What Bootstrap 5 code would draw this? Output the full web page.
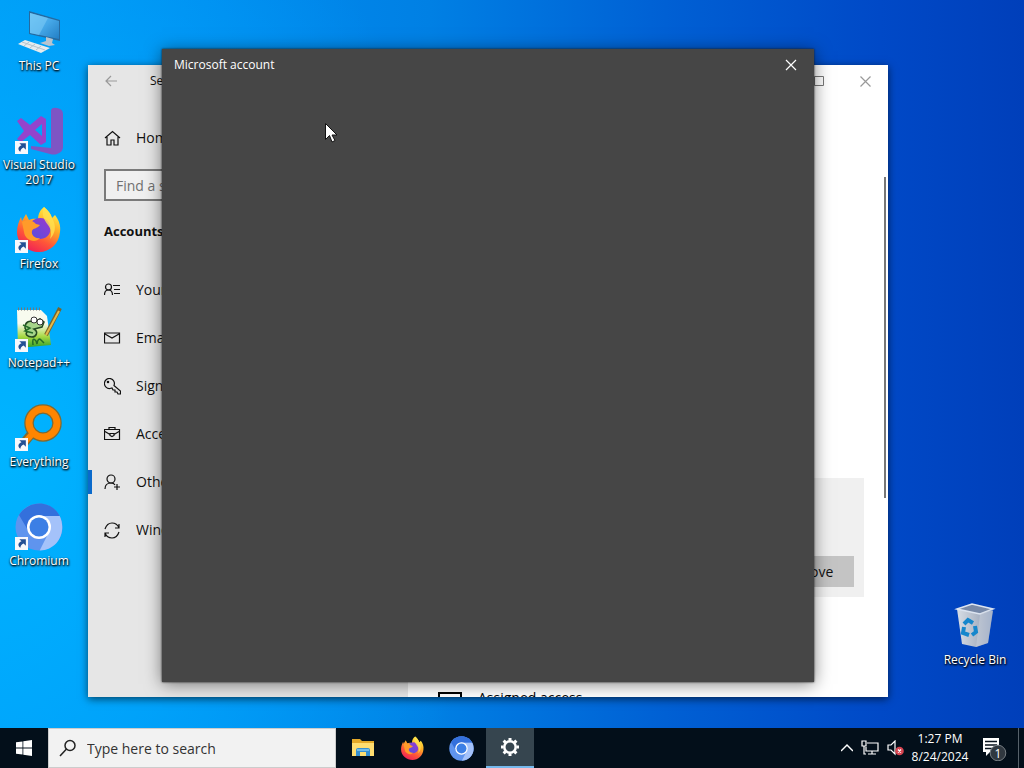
<!DOCTYPE html>
<html lang="en">
<head>
<meta charset="utf-8">
<meta name="viewport" content="width=device-width, initial-scale=1">
<title>Desktop</title>
<link href="https://cdn.jsdelivr.net/npm/bootstrap@5.3.0/dist/css/bootstrap.min.css" rel="stylesheet">
<style>
body{font-family:"Open Sans","Noto Sans",sans-serif;font-size:14px;line-height:20px;color:#111;background:#0046c0}
button{color:inherit}
svg{display:block;flex:none}
.line-art{fill:none;stroke:currentColor;stroke-width:1.2}
.desktop{background:radial-gradient(ellipse 48% 90% at 0 62%,#00b4ff 0,rgba(0,172,255,.75) 40%,rgba(0,160,250,0) 100%),linear-gradient(90deg,#009af4 0,#008df0 18%,#0080e4 42%,#0060d4 65%,#0049c7 86%,#003fba 100%)}
.shortcuts{width:78px}
.shortcut{height:99px;padding-top:8px;color:#fff;font-size:12px;line-height:15px;text-align:center;text-decoration:none;text-shadow:1px 1px 2px #000,0 1px 2px #000}
.shortcut:hover{color:#fff}
.shortcut svg{margin-bottom:2px}
.recycle{right:10px;bottom:35px;width:78px}
.settings-win{inset:65px 136px 31px 88px;background:#fff;box-shadow:0 2px 8px rgba(0,0,0,.6)}
.account-win{inset:49px 210px 46px 162px;background:#464646;color:#fff;box-shadow:0 2px 16px rgba(0,0,0,.5),0 0 2px #222}
.win-head{height:32px;font-size:12px;flex:none}
.side{width:320px;background:#e6e6e6}
.back{color:#999}
.side-row{height:48px;padding-left:16px;color:#111;text-decoration:none;gap:15px}
.side-home{margin-top:17px}
.side-row.current{background:linear-gradient(#0a6acb,#0a6acb) 0 50%/4px 24px no-repeat}
.find{height:32px;margin:7px 16px 0;border:2px solid #7a7a7a;border-radius:0;background:#f0f0f0;padding:0 10px;font-size:14px;width:288px}
.find::placeholder{color:#707070;opacity:1}
.side-title{font-size:13px;line-height:30px;margin:15px 16px 20px}
.main-pane{padding:0 24px 0 30px}
.user-card{background:#f0f0f0;height:119px;margin-top:381px;padding:10px}
.remove{background:#c4c4c4;border:0;height:31px;width:94px}
.assigned{margin-top:91px;gap:16px;color:#000}
.scroll-thumb{right:2px;top:112px;width:2px;height:321px;background:#777}
.cap-btn{width:46px;height:32px}
.pointer-arrow{left:325px;top:123px}
.taskbar{height:40px;background:#030f1a;color:#fff}
.task-btn{width:48px;height:40px}
.task-apps{margin-left:3px;gap:1px}
.task-btn.active-app{background:#36454f;border-bottom:2px solid #76b9ed!important}
.search-box{width:288px;background:#f2f2f2;border:1px solid #ccc;color:#222;padding-left:10px;gap:10px}
.task-search{font-size:14px;color:#333;background:none;border:0;width:230px;padding:2px 0 0}
.task-search::placeholder{color:#333;opacity:1}
.clock{font-size:12px;line-height:18px;width:60px;margin-left:6px}
.peek{width:6px;border-left:1px solid #56616a}
</style>
</head>
<body class="vh-100 d-flex flex-column overflow-hidden">
<svg width="0" height="0" class="position-absolute" aria-hidden="true">
<defs>
<linearGradient id="ffBody" x1=".7" y1="0" x2=".2" y2="1"><stop offset="0" stop-color="#fff048"/><stop offset=".35" stop-color="#ffac25"/><stop offset=".65" stop-color="#ff5738"/><stop offset="1" stop-color="#ed175b"/></linearGradient>
<linearGradient id="ffCore" x1="0" y1="1" x2="1" y2="0"><stop offset="0" stop-color="#5550df"/><stop offset="1" stop-color="#9b37cd"/></linearGradient>
<linearGradient id="screen" x2="1" y2="1"><stop stop-color="#65c2f5"/><stop offset=".5" stop-color="#46a8e8"/><stop offset="1" stop-color="#237fc5"/></linearGradient>
<linearGradient id="pad" y2="1" x2="0"><stop offset=".35" stop-color="#f8fbef"/><stop offset=".7" stop-color="#a7d944"/><stop offset="1" stop-color="#2e9e26"/></linearGradient>
<linearGradient id="bin" x2="1"><stop stop-color="#d7dde5"/><stop offset=".55" stop-color="#afb8c7"/><stop offset="1" stop-color="#8094b8"/></linearGradient>
<symbol id="link-arrow" viewBox="0 0 12 12"><path fill="#f8f8fc" d="M0 0h12v12H0z"/><path fill="#244f94" d="M4 2h6v6L8 6C6 7 5 8 5 10 2 8 3 5 6 4z"/></symbol>
<symbol id="firefox" viewBox="0 0 48 48"><path fill="url(#ffBody)" d="M29 1c4 3 7 7 8 11l3-3c4 5 6 11 5 17-1 12-10 20-21 20S2 38 2 26c0-6 2-11 4-15l1 4 4-7 3 6c3-1 7-2 9 0 0-6 2-10 6-13z"/><path fill="url(#ffCore)" d="M16 16c6-6 15-5 18 1 4 7 0 16-9 16-7 0-11-6-9-11z"/><path fill="#ff9b2a" d="M7 16c5-3 11-2 14 2l4 1c-3 4-7 3-8 6-1 4 3 8 8 7-5 6-15 2-16-6z"/><path fill="#ffe150" d="M29 1c4 3 7 7 8 11 5 8 3 16-2 21 2-6 1-10-2-14-4-5-7-11-4-18z" opacity=".8"/></symbol>
<symbol id="chromium" viewBox="0 0 48 48"><circle cx="24" cy="24" r="23.500" fill="#5f94ee"/><path fill="#3470dc" d="M4 12C14-4 37-3 44.700 13H24c-7 0-11 5-11 11 0 2 0 4 1 5z"/><path fill="#a4c2fa" d="M24 13h20.700c7 15-1 34-20 34.500L34 29c3-6 0-13-10-16z"/><circle cx="24" cy="24" r="12" fill="#fff"/><circle cx="24" cy="24" r="9.500" fill="#3c7fe5"/></symbol>
</defs></svg>

<main class="desktop position-relative flex-grow-1 overflow-hidden">
<nav class="shortcuts d-flex flex-column" aria-label="Desktop">
<a href="#" class="shortcut d-flex flex-column align-items-center"><svg width="48" height="48" viewBox="0 0 48 48"><path fill="#256aa0" d="M14 3l31 9v21l-31-7z"/><path fill="url(#screen)" d="M15 5l29 8v18l-29-6z"/><path fill="#7cc9f5" d="M15 5l18 5-9 17-9-2z" opacity=".6"/><path fill="#b7c4cf" d="M31 29l7 2-1 4 3 2-6 1-9-3 6-2z"/><path fill="#e6ebee" d="M10 32l25 8-9 5-23-9z"/><path stroke="#b4c3cd" fill="none" d="M7 34l23 8M14 34l-5 4m11-2l-5 4m11-2l-5 4"/></svg>This PC</a>
<a href="#" class="shortcut d-flex flex-column align-items-center"><svg width="48" height="48" viewBox="0 0 48 48"><path fill="#7e55c4" d="M36 3q1-3 6-2 6 1 6 6v33q0 5-6 7-3 1-7 0l-19-5v-3l20 2z"/><path fill="#9444cc" fill-rule="evenodd" d="M2 14l4-3 9 7 11-9 5 3v23l-5 3-11-10-9 7-4-3 7-8zm18 9l7 6V17z"/><use href="#link-arrow" x="0" y="34" width="13" height="13"/></svg>Visual Studio<br>2017</a>
<a href="#" class="shortcut d-flex flex-column align-items-center"><svg width="48" height="48" viewBox="0 0 48 48"><use href="#firefox" width="48" height="48"/><use href="#link-arrow" x="0" y="34" width="13" height="13"/></svg>Firefox</a>
<a href="#" class="shortcut d-flex flex-column align-items-center"><svg width="48" height="48" viewBox="0 0 48 48"><path fill="url(#pad)" d="M2 5h24l6 6 4 29-33 3z"/><path stroke="#777" stroke-width="3" stroke-dasharray="1 2" d="M3 4h23"/><path fill="#a6d58a" stroke="#244a22" stroke-width="1.500" d="M10 23c0-6 4-8 9-6l6-3 4 3-2 5-8 2c5 3 2 8-2 8-5 0-7-3-5-5z"/><g fill="#fff" stroke="#333"><circle cx="19" cy="15" r="3"/><circle cx="25" cy="17" r="3"/></g><path d="M8 20l7 3-5 3 8 2M18 40q-1-9 3-4l1 3q1-7 4-4l3 3" fill="none" stroke="#236c27" stroke-width="1.500"/><path stroke="#79632a" stroke-width="4" d="M31 30L45 3"/><path stroke="#e4ba49" stroke-width="2" d="M31 30L44 6"/><use href="#link-arrow" x="0" y="34" width="13" height="13"/></svg>Notepad++</a>
<a href="#" class="shortcut d-flex flex-column align-items-center"><svg width="48" height="48" viewBox="0 0 48 48"><path stroke="#7d6a35" stroke-width="9" d="M18 28L8 40"/><circle cx="28" cy="19" r="14" fill="none" stroke="#7d6a35" stroke-width="9.500"/><path stroke="#ff8500" stroke-width="6" d="M19 28L9 39"/><circle cx="28" cy="19" r="14" fill="none" stroke="#ff8500" stroke-width="7"/><use href="#link-arrow" x="0" y="34" width="13" height="13"/></svg>Everything</a>
<a href="#" class="shortcut d-flex flex-column align-items-center"><svg width="48" height="48" viewBox="0 0 48 48"><use href="#chromium" width="48" height="48"/><use href="#link-arrow" x="0" y="34" width="13" height="13"/></svg>Chromium</a>
</nav>
<a href="#" class="shortcut recycle position-absolute d-flex flex-column align-items-center"><svg width="48" height="48" viewBox="0 0 48 48"><path fill="url(#bin)" d="M6 7l36 2-5 32-12 4-14-3z"/><path fill="#7889a7" stroke="#dce4f0" stroke-width="1.500" d="M6 7l15-5 21 5-13 5z"/><path fill="#cbd1dc" opacity=".5" d="M29 12l13-5-5 34-12 4z"/><g fill="none" stroke="#1687cc" stroke-width="4"><path d="M13 22l4-4 5 3M24 24l1 6-4 3M18 33l-6-2 1-6"/></g></svg>Recycle Bin</a>

<section class="settings-win position-absolute d-flex overflow-hidden" aria-label="Settings">
<div class="side flex-shrink-0 d-flex flex-column">
<div class="win-head d-flex align-items-center"><button class="btn p-0 border-0 back d-flex justify-content-center cap-btn align-items-center rounded-0" aria-label="Back"><svg class="line-art" width="12" height="12" viewBox="0 0 12 12"><path d="M12 6H1m5-5L1 6l5 5"/></svg></button><span class="ms-3">Settings</span></div>
<a href="#" class="side-row side-home d-flex align-items-center"><svg class="line-art" width="17" height="17" viewBox="0 0 17 17"><path d="M1 8l7.500-6.500L16 8M3 7v8h4v-5h3v5h4V7"/></svg>Home</a>
<input class="find" type="search" placeholder="Find a setting" aria-label="Find a setting">
<h2 class="side-title fw-bold">Accounts</h2>
<nav>
<a href="#" class="side-row d-flex align-items-center"><svg class="line-art" width="17" height="17" viewBox="0 0 17 17"><circle cx="4.500" cy="5" r="3"/><path d="M.5 13q0-5 4-5t4 5M9 3.500h7M10 7.500h6M10 11.500h6"/></svg>Your info</a>
<a href="#" class="side-row d-flex align-items-center"><svg class="line-art" width="17" height="17" viewBox="0 0 17 17"><path d="M.5 3h15v10H.5zM1 4l7 4 7-4"/></svg>Email &amp; accounts</a>
<a href="#" class="side-row d-flex align-items-center"><svg class="line-art" width="17" height="17" viewBox="0 0 17 17"><path d="M10 7.500A5 5 0 1 0 6 10.500l2-.5 1 2h2v2h2l1 2h2.500v-3z"/><circle cx="4" cy="4" r=".7"/></svg>Sign-in options</a>
<a href="#" class="side-row d-flex align-items-center"><svg class="line-art" width="17" height="17" viewBox="0 0 17 17"><path d="M.5 3.500h15v10H.5zM5 3.500v-2h6v2M1 5.500l5 3m4 0l5-3M6 7.500h4v2l-2 1-2-1z"/></svg>Access work or school</a>
<a href="#" class="side-row current d-flex align-items-center" aria-current="page"><svg class="line-art" width="17" height="17" viewBox="0 0 17 17"><circle cx="7" cy="5" r="4"/><path d="M1 15q0-6 6-6 3 0 4 2M13 10v6M10 13h6"/></svg>Other users</a>
<a href="#" class="side-row d-flex align-items-center"><svg class="line-art" width="17" height="17" viewBox="0 0 17 17"><path d="M1 7Q3 1 8 1t7 5m0-4v4h-4M15 10q-2 6-7 6t-7-5m0 4v-4h4"/></svg>Windows backup</a>
</nav></div>
<div class="flex-grow-1 position-relative">
<div class="win-head d-flex justify-content-end"><button class="btn p-0 border-0 cap-btn d-flex align-items-center justify-content-center rounded-0" aria-label="Maximize"><svg class="line-art" width="10" height="10" viewBox="0 0 10 10"><path stroke="#777" stroke-width="1" d="M.5.5h9v9h-9z"/></svg></button><button class="btn p-0 border-0 cap-btn d-flex align-items-center justify-content-center rounded-0" aria-label="Close"><svg class="line-art" width="11" height="11" viewBox="0 0 11 11"><path stroke="#999" d="M.5.5l10 10m0-10l-10 10"/></svg></button></div>
<div class="main-pane"><div class="user-card d-flex justify-content-end align-items-end"><button class="remove">Remove</button></div>
<div class="assigned d-flex"><svg width="24" height="22" viewBox="0 0 24 22" class="mt-1"><path d="M1 1h22v14H1z" fill="none" stroke="#000" stroke-width="2"/></svg><span>Assigned access</span></div></div>
<div class="scroll-thumb position-absolute"></div>
</div></section>

<section class="account-win position-absolute" role="dialog" aria-label="Microsoft account">
<div class="win-head d-flex align-items-center justify-content-between"><span class="ps-2 ms-1">Microsoft account</span><button class="btn p-0 border-0 cap-btn d-flex align-items-center justify-content-center text-white rounded-0" aria-label="Close"><svg class="line-art" width="12" height="12" viewBox="0 0 12 12"><path d="M1 1l10 10m0-10L1 11"/></svg></button></div>
</section>
<svg class="pointer-arrow position-absolute" width="13" height="20" viewBox="0 0 13 20"><path fill="#fff" stroke="#111" d="M.5.5v16l4-4 2.500 6.500 3-1.500L7 12h5z"/></svg>
</main>

<footer class="taskbar d-flex flex-shrink-0">
<button class="btn p-0 border-0 task-btn d-flex align-items-center justify-content-center rounded-0" aria-label="Start"><svg width="16" height="16" viewBox="0 0 16 16"><path fill="#fff" d="M0 2.300l6.500-.9v6.200H0zM7.300 1.300L16 0v7.600H7.300zM0 8.400h6.500v6.200L0 13.700zM7.300 8.400H16V16l-8.700-1.300z"/></svg></button>
<label class="search-box d-flex align-items-center"><svg class="line-art" width="18" height="18" viewBox="0 0 18 18"><circle cx="11" cy="6.500" r="5" stroke-width="1.500"/><path stroke-width="1.500" d="M7.500 10L1 17"/></svg><input class="task-search" type="search" placeholder="Type here to search" aria-label="Type here to search"></label>
<div class="task-apps d-flex">
<button class="btn p-0 border-0 task-btn d-flex align-items-center justify-content-center rounded-0" aria-label="File Explorer"><svg width="22" height="20" viewBox="0 0 22 20"><path fill="#e4a929" d="M0 1h8l2 2h12v15H0z"/><path fill="#ffdd70" d="M0 5h22v13H0z"/><path fill="#368fd0" d="M4 18v-6q0-2 2-2h10q2 0 2 2v6h-4v-4H8v4z"/><path fill="#73bde9" d="M5 11h12v2H5z"/></svg></button>
<button class="btn p-0 border-0 task-btn d-flex align-items-center justify-content-center rounded-0" aria-label="Firefox"><svg width="25" height="25"><use href="#firefox" width="25" height="25"/></svg></button>
<button class="btn p-0 border-0 task-btn d-flex align-items-center justify-content-center rounded-0" aria-label="Chromium"><svg width="25" height="25"><use href="#chromium" width="25" height="25"/></svg></button>
<button class="btn p-0 border-0 task-btn active-app d-flex align-items-center justify-content-center rounded-0" aria-label="Settings"><svg width="20" height="20" viewBox="0 0 20 20"><g fill="none" stroke="#fff"><circle cx="10" cy="10" r="5.700" stroke-width="2.500"/><path stroke-width="3" d="M10 1v2.500M10 16.500V19M1 10h2.500M16.500 10H19M3.600 3.600l1.800 1.800M14.600 14.600l1.800 1.800M3.600 16.400l1.800-1.800M14.600 5.400l1.800-1.800"/></g></svg></button>
</div>
<div class="ms-auto d-flex align-items-center">
<svg class="line-art" width="12" height="12" viewBox="0 0 12 12"><path stroke-width="1.500" d="M0 9l6-6 6 6"/></svg>
<svg class="line-art ms-2 me-2" width="18" height="16" viewBox="0 0 18 16"><path d="M6 3h11v8H5V7M1 1h4v5H1zM3 6v8h2M11 11v3M7 14h8"/></svg>
<svg width="17" height="16" viewBox="0 0 17 16"><path fill="none" stroke="#fff" stroke-width="1.200" d="M1 5h3l4-4v13l-4-4H1z"/><circle cx="12.500" cy="11" r="4.300" fill="#d64450"/><path stroke="#fff" stroke-width="1.300" d="M11 9.500l3 3m0-3l-3 3"/></svg>
<time class="clock text-center">1:27 PM<br>8/24/2024</time>
<button class="btn p-0 border-0 task-btn d-flex align-items-center justify-content-center rounded-0" aria-label="1 notification"><svg width="26" height="26" viewBox="0 0 26 26"><path fill="#fff" d="M2 3h16v14H9l-4 4v-4H2z"/><path stroke="#07121d" stroke-width="1.300" d="M4 6.500h12M4 10h12M4 13.500h7"/><circle cx="17" cy="18" r="7.800" fill="#303840" stroke="#747b81"/><text x="17" y="22.500" fill="#fff" font-size="12" text-anchor="middle">1</text></svg></button>
<div class="peek align-self-stretch"></div>
</div></footer>
<script src="https://cdn.jsdelivr.net/npm/bootstrap@5.3.0/dist/js/bootstrap.bundle.min.js"></script>
</body>
</html>
